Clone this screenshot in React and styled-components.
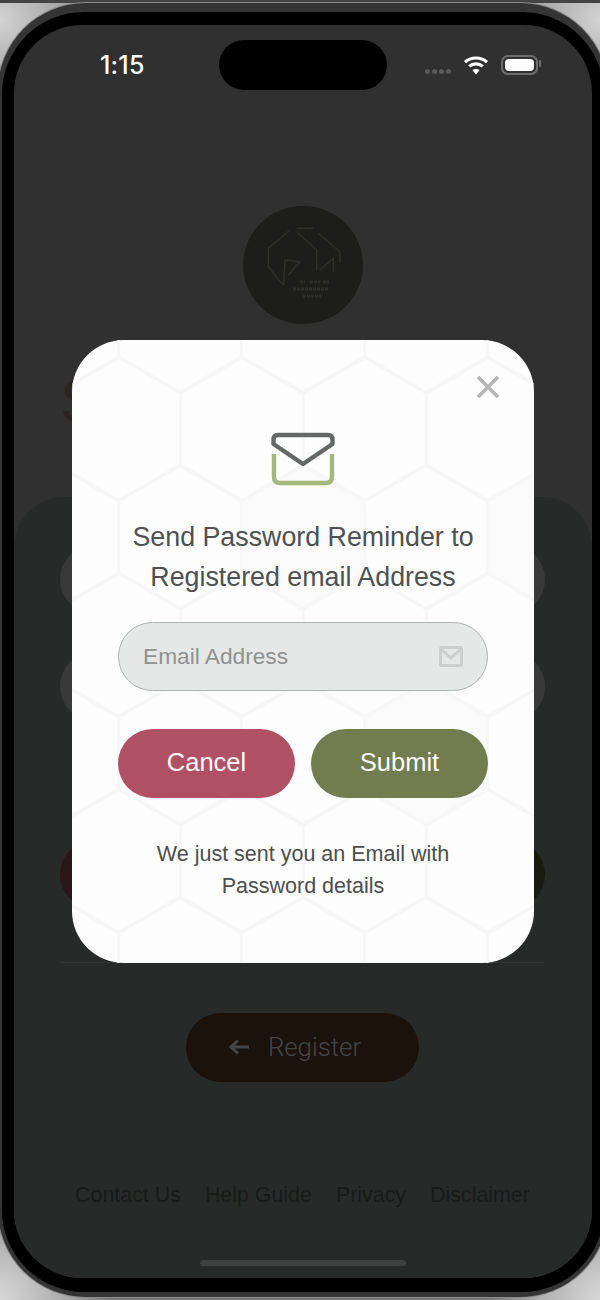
import React from "react";
import styled, { createGlobalStyle } from "styled-components";

const GlobalStyle = createGlobalStyle`
  html, body {
    margin: 0;
    padding: 0;
    background: #9a9a9a;
  }
  * {
    box-sizing: border-box;
  }
`;

const Page = styled.div`
  width: 600px;
  height: 1300px;
  overflow: hidden;
  padding-top: 3px;
  box-shadow: inset 0 3px 0 #444;
  background:
    radial-gradient(circle at 0 20px, #d2d2d2 0, #a8a8a8 60px, transparent 110px),
    radial-gradient(circle at 600px 20px, #d2d2d2 0, #a8a8a8 60px, transparent 110px),
    radial-gradient(circle at 0 1300px, #d8d8d8 0, #b0b0b0 60px, transparent 110px),
    radial-gradient(circle at 600px 1300px, #d8d8d8 0, #b0b0b0 60px, transparent 110px),
    #777;
  font-family: "Liberation Sans", Arial, sans-serif;
`;

const Device = styled.div`
  width: 610px;
  height: 1294px;
  margin-left: -2px;
  padding: 9px 4px 5px;
  border-radius: 88px;
  background: #343434;
  box-shadow: 0 0 0 1px #8a8a8a;
`;

const Bezel = styled.div`
  height: 100%;
  padding: 13px 12px 14px;
  border-radius: 82px;
  background: #000;
`;

const Screen = styled.div`
  position: relative;
  display: flex;
  flex-direction: column;
  height: 100%;
  overflow: hidden;
  border-radius: 68px;
  background: #303030;
`;

const StatusBar = styled.div`
  display: grid;
  grid-template-columns: 205px 168px 1fr;
  align-items: center;
  height: 50px;
  margin-top: 15px;
  flex-shrink: 0;
`;

const Clock = styled.span`
  padding-left: 86px;
  color: #fff;
  font-family: Inter, sans-serif;
  font-size: 25px;
  font-weight: 500;
  letter-spacing: 0.2px;
`;

const Island = styled.div`
  height: 50px;
  border-radius: 25px;
  background: #000;
`;

const StatusIcons = styled.div`
  display: flex;
  align-items: center;
  justify-content: flex-end;
  gap: 12px;
  padding-right: 54px;
`;

const SignalDots = styled.div`
  display: flex;
  gap: 2px;
  margin-top: 12px;
`;

const SignalDot = styled.i`
  display: block;
  width: 5px;
  height: 5px;
  border-radius: 50%;
  background: #595959;
`;

const Battery = styled.div`
  position: relative;
  width: 37px;
  height: 20px;
  padding: 2px;
  border: 2px solid #6d6d6d;
  border-radius: 7px;
  &::before {
    content: "";
    display: block;
    height: 100%;
    border-radius: 4px;
    background: #fff;
  }
  &::after {
    content: "";
    position: absolute;
    top: 3px;
    right: -5px;
    width: 2px;
    height: 7px;
    border-radius: 1px;
    background: #6d6d6d;
  }
`;

const LogoRow = styled.div`
  display: flex;
  justify-content: center;
  margin-top: 116px;
  flex-shrink: 0;
`;

const Logo = styled.div`
  width: 120px;
  height: 118px;
  border-radius: 50%;
  background: #1d1e1b;
`;

const Heading = styled.div`
  height: 173px;
  padding: 46px 0 0 46px;
  color: #2b2420;
  font-size: 62px;
  line-height: 62px;
  flex-shrink: 0;
`;

const Sheet = styled.div`
  flex: 1;
  display: flex;
  flex-direction: column;
  padding: 48px 47px 0 46px;
  border-radius: 50px 50px 0 0;
  background: #282a29;
`;

const GhostField = styled.div`
  height: 69px;
  margin-bottom: 38px;
  border-radius: 35px;
  background: #393939;
`;

const GhostActions = styled.div`
  display: grid;
  grid-template-columns: 1fr 1fr;
  gap: 16px;
  margin-top: 81px;
`;

const GhostButton = styled.div`
  height: 69px;
  border-radius: 35px;
  background: ${(props) => props.$color};
`;

const Divider = styled.div`
  height: 1px;
  margin-top: 53px;
  background: #333534;
`;

const RegisterButton = styled.div`
  display: flex;
  align-items: center;
  justify-content: center;
  gap: 19px;
  align-self: center;
  width: 233px;
  height: 69px;
  margin-top: 50px;
  padding: 0 16px 2px 0;
  border-radius: 35px;
  background: #1b120c;
  color: #454545;
  font-family: Roboto, sans-serif;
  font-size: 25.8px;
  font-weight: 300;
`;

const FooterLinks = styled.div`
  display: flex;
  justify-content: center;
  gap: 24px;
  margin-top: 100px;
  color: #181a1a;
  font-size: 21.4px;
  line-height: 26px;
  white-space: nowrap;
`;

const HomeIndicator = styled.div`
  align-self: center;
  width: 206px;
  height: 6px;
  margin-top: 52px;
  border-radius: 3px;
  background: #3f4040;
`;

const Modal = styled.div`
  position: absolute;
  top: 315px;
  left: 58px;
  display: flex;
  flex-direction: column;
  align-items: center;
  width: 462px;
  height: 623px;
  overflow: hidden;
  padding-top: 36px;
  border-radius: 52px;
  background: #fdfdfd;
`;

const HexBackdrop = styled.svg`
  position: absolute;
  top: 0;
  left: 0;
`;

const CloseButton = styled.button`
  position: relative;
  align-self: flex-end;
  width: 24px;
  height: 22px;
  margin-right: 34px;
  padding: 0;
  border: 0;
  background: none;
`;

const EnvelopeIcon = styled.svg`
  position: relative;
  display: block;
  margin-top: 34px;
`;

const Title = styled.h2`
  position: relative;
  margin: 31px 0 0;
  color: #4f5151;
  font-size: 26.8px;
  font-weight: 400;
  line-height: 40px;
  text-align: center;
`;

const InputPill = styled.div`
  position: relative;
  display: flex;
  align-items: center;
  justify-content: space-between;
  width: 370px;
  height: 69px;
  margin-top: 25px;
  padding: 0 24px 0 24px;
  border: 1px solid #aeb2b2;
  border-radius: 35px;
  background: #e6e7e7;
  color: #8f9191;
  font-size: 22.7px;
`;

const Actions = styled.div`
  position: relative;
  display: grid;
  grid-template-columns: 177px 177px;
  gap: 16px;
  margin-top: 38px;
`;

const ActionButton = styled.button`
  height: 69px;
  padding: 0 0 3px;
  border: 0;
  border-radius: 35px;
  background: ${(props) => props.$color};
  color: #fbfbf8;
  font-family: inherit;
  font-size: 25.5px;
`;

const Note = styled.p`
  position: relative;
  margin: 40px 0 0;
  color: #4c4e4e;
  font-size: 21.5px;
  line-height: 32px;
  text-align: center;
`;

// hexagon tiles behind the dialog, centres are relative to the dialog
const HEX_W = 61.5;
const HEX_S = 71;
const hexTiles = [];
for (let row = -1; row < 6; row++) {
  const cy = 89 + row * 108;
  const odd = Math.abs(row) % 2 === 1;
  for (let col = -1; col < 5; col++) {
    const cx = (odd ? 231 : 170) + (col - 1) * 123;
    const shaded = (row === 1 && (cx === 231 || cx === 477)) || (row === 3 && cx === 354);
    hexTiles.push({ cx, cy, shaded });
  }
}

const hexPoints = ({ cx, cy }) =>
  [
    [cx, cy - HEX_S],
    [cx + HEX_W, cy - HEX_S / 2],
    [cx + HEX_W, cy + HEX_S / 2],
    [cx, cy + HEX_S],
    [cx - HEX_W, cy + HEX_S / 2],
    [cx - HEX_W, cy - HEX_S / 2],
  ]
    .map((p) => p.join(","))
    .join(" ");

const WifiIcon = () => (
  <svg width="26" height="20" viewBox="0 0 26 20" fill="none" stroke="#fff" strokeWidth="3.2">
    <path d="M2 7.2C8 1.6 18 1.6 24 7.2" />
    <path d="M6.2 11.4C10 8 16 8 19.8 11.4" />
    <path d="M13 19.5l-3.6-4.3c2-1.7 5.2-1.7 7.2 0z" fill="#fff" stroke="none" />
  </svg>
);

const LogoMark = () => (
  <svg width="120" height="118" viewBox="0 0 120 118" fill="none" stroke="#2e2f29" strokeWidth="1.4">
    <path d="M40 79L25.3 60.7V42.3L47 24" />
    <path d="M53.7 22.3H70.3" />
    <path d="M53.7 25.7L73.7 44V64" />
    <path d="M75.3 27.3L97 45.7V57" />
    <path d="M40.5 79L42 54L57 55.7L45.3 69" />
    <path d="M77 64L90.3 52.3V66" />
    <path d="M57 76h5M67 76h10M80 76h6M50 83h36M60 90h18" strokeWidth="3" strokeDasharray="3 1" />
  </svg>
);

const BackArrow = () => (
  <svg width="21" height="18" viewBox="0 0 21 18" fill="none" stroke="#454545" strokeWidth="3">
    <path d="M21 9H4" />
    <path d="M10 2.5L3 9l7 6.5" />
  </svg>
);

const App = () => {
  return (
    <Page>
      <GlobalStyle />
      <Device>
        <Bezel>
          <Screen>
            <StatusBar>
              <Clock>1:15</Clock>
              <Island />
              <StatusIcons>
                <SignalDots>
                  <SignalDot />
                  <SignalDot />
                  <SignalDot />
                  <SignalDot />
                </SignalDots>
                <WifiIcon />
                <Battery />
              </StatusIcons>
            </StatusBar>
            <LogoRow>
              <Logo>
                <LogoMark />
              </Logo>
            </LogoRow>
            <Heading>S</Heading>
            <Sheet>
              <GhostField />
              <GhostField />
              <GhostActions>
                <GhostButton $color="#2a171b" />
                <GhostButton $color="#191a10" />
              </GhostActions>
              <Divider />
              <RegisterButton>
                <BackArrow />
                Register
              </RegisterButton>
              <FooterLinks>
                <span>Contact Us</span>
                <span>Help Guide</span>
                <span>Privacy</span>
                <span>Disclaimer</span>
              </FooterLinks>
              <HomeIndicator />
            </Sheet>
            <Modal>
              <HexBackdrop width="462" height="623" viewBox="0 0 462 623">
                {hexTiles.map((hex) => (
                  <polygon
                    key={`${hex.cx}-${hex.cy}`}
                    points={hexPoints(hex)}
                    fill={hex.shaded ? "#fafafa" : "none"}
                    stroke="#f7f7f7"
                    strokeWidth="2.5"
                  />
                ))}
              </HexBackdrop>
              <CloseButton aria-label="Close">
                <svg width="24" height="22" viewBox="0 0 24 22" stroke="#b4b4b4" strokeWidth="3.4">
                  <path d="M2 1l20 20M22 1L2 21" />
                </svg>
              </CloseButton>
              <EnvelopeIcon width="64" height="54" viewBox="0 0 64 54" fill="none" strokeWidth="4.4">
                <path
                  d="M7 3H57Q61.5 3 61.5 7.5V12L32 32L2.5 12V7.5Q2.5 3 7 3Z"
                  stroke="#666868"
                  strokeLinejoin="round"
                />
                <path d="M3 22V45C3 49 5 51 9 51H55C59 51 61 49 61 45V22" stroke="#a4b77d" />
              </EnvelopeIcon>
              <Title>
                Send Password Reminder to
                <br />
                Registered email Address
              </Title>
              <InputPill>
                Email Address
                <svg width="24" height="21" viewBox="0 0 24 21" fill="none" stroke="#cdcece" strokeWidth="3">
                  <rect x="1.5" y="1.5" width="21" height="18" rx="1.5" />
                  <path d="M2 3l10 9 10-9" />
                </svg>
              </InputPill>
              <Actions>
                <ActionButton $color="#b05064">Cancel</ActionButton>
                <ActionButton $color="#727c4e">Submit</ActionButton>
              </Actions>
              <Note>
                We just sent you an Email with
                <br />
                Password details
              </Note>
            </Modal>
          </Screen>
        </Bezel>
      </Device>
    </Page>
  );
};

export default App;
